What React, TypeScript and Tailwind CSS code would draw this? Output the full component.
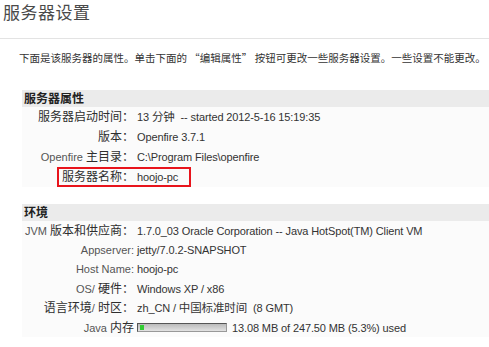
import React from 'react';

type Row = { label: string; value: React.ReactNode; highlight?: boolean };

// CJK runs render a bit larger than the latin text, like the original page
const CJK = /([\u3000-\u9fff\uff00-\uffef“”]+)/;

function Mixed({ text, label }: { text: string; label?: boolean }) {
  return (
    <>
      {text.split(CJK).map((part, i) =>
        CJK.test(part) ? (
          <span key={i} className={label ? 'text-[12px] text-[#2e2e2e]' : 'text-[11.5px]'}>
            {part}
          </span>
        ) : (
          <span key={i}>{part}</span>
        ),
      )}
    </>
  );
}

const serverRows: Row[] = [
  { label: '服务器启动时间：', value: '13 分钟  -- started 2012-5-16 15:19:35' },
  { label: '版本：', value: 'Openfire 3.7.1' },
  { label: 'Openfire 主目录：', value: 'C:\\Program Files\\openfire' },
  { label: '服务器名称：', value: 'hoojo-pc', highlight: true },
];

function MemoryBar() {
  return (
    <div className="flex items-center">
      <div className="relative h-[9px] w-[90px] border border-[#555] border-b-[#999] border-r-[#999] bg-gradient-to-b from-[#bbb] to-[#e2e2e2]">
        <div className="absolute left-[2px] top-[1px] h-[5px] w-[4px] bg-[#33cc33]" />
      </div>
      <span className="ml-[5px]">13.08 MB of 247.50 MB (5.3%) used</span>
    </div>
  );
}

const envRows: Row[] = [
  { label: 'JVM 版本和供应商：', value: '1.7.0_03 Oracle Corporation -- Java HotSpot(TM) Client VM' },
  { label: 'Appserver:', value: 'jetty/7.0.2-SNAPSHOT' },
  { label: 'Host Name:', value: 'hoojo-pc' },
  { label: 'OS/ 硬件：', value: 'Windows XP / x86' },
  { label: '语言环境/ 时区：', value: 'zh_CN / 中国标准时间  (8 GMT)' },
  { label: 'Java 内存', value: <MemoryBar /> },
];

function Section({ title, rows, rowHeight }: { title: string; rows: Row[]; rowHeight: string }) {
  return (
    <div className="ml-[22px]">
      <div className="flex h-[17px] items-center bg-[#ebebeb] pl-[2px] text-[12px] font-bold text-[#222]">
        {title}
      </div>
      <div className="bg-[#fbfbfb]">
        {rows.map((row) => (
          <div key={row.label} className={`flex items-center ${rowHeight}`}>
            <div className="w-[112px] shrink-0 text-right">
              <span className="relative whitespace-pre text-[#555]">
                {row.highlight && (
                  <span className="absolute -left-[5px] -right-[57px] -top-[4px] -bottom-[4px] border-2 border-[#e8141c]" />
                )}
                <Mixed text={row.label} label />
              </span>
            </div>
            <div className="ml-[3px] whitespace-pre tracking-[-0.12px] text-[#333]">
              {typeof row.value === 'string' ? <Mixed text={row.value} /> : row.value}
            </div>
          </div>
        ))}
      </div>
    </div>
  );
}

export default function App() {
  return (
    <div
      className="h-[347px] w-[489px] overflow-hidden bg-white text-[11px] leading-[14px]"
      style={{ fontFamily: '"Liberation Sans", Arial, "Noto Sans CJK SC", sans-serif' }}
    >
      <h1 className="px-[3px] pt-[4px] text-[17px] leading-[20px] font-normal tracking-[0.5px] text-[#4a4a4a]">
        服务器设置
      </h1>
      <div className="mt-[14px] h-px bg-[#e3e3e3]" />
      <p className="mt-[12px] pl-[19px] whitespace-nowrap text-[10.5px] text-[#333]">
        下面是该服务器的属性。单击下面的
        <span style={{ fontFamily: '"Noto Sans CJK SC", sans-serif' }}> “编辑属性” </span>
        按钮可更改一些服务器设置。一些设置不能更改。
      </p>
      <div className="mt-[25px]">
        <Section title="服务器属性" rows={serverRows} rowHeight="h-[20px]" />
      </div>
      <div className="mt-[17px]">
        <Section title="环境" rows={envRows} rowHeight="h-[19.4px]" />
      </div>
    </div>
  );
}
